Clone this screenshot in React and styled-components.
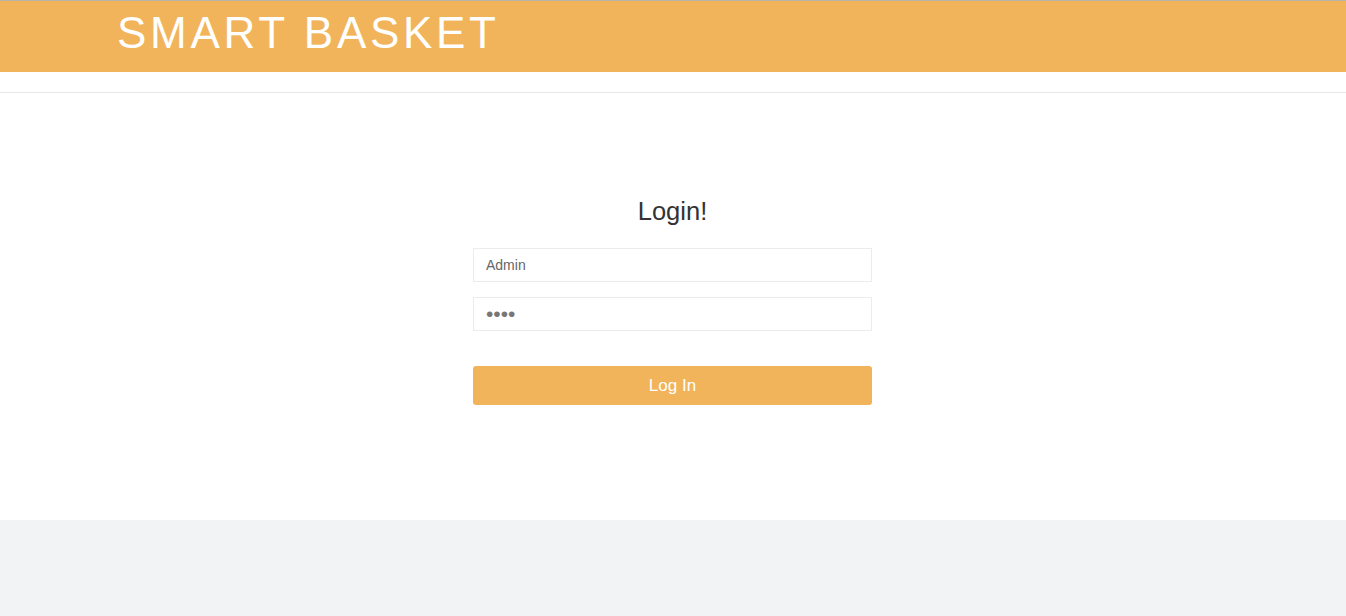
import React, { useState } from "react";
import styled, { createGlobalStyle } from "styled-components";

const GlobalStyle = createGlobalStyle`
  html, body {
    margin: 0;
    padding: 0;
    background: #f2f3f5;
    font-family: "Liberation Sans", Arial, sans-serif;
  }
`;

const ORANGE = "#f1b45a";

const Header = styled.header`
  box-sizing: border-box;
  height: 72px;
  border-top: 1px solid #b9b3a8;
  background: ${ORANGE};
  padding: 10px 0 0 117px;
`;

const Brand = styled.h1`
  margin: 0;
  font-size: 44px;
  line-height: 44px;
  font-weight: normal;
  letter-spacing: 3.7px;
  color: #ffffff;
`;

const Spacer = styled.div`
  height: 20px;
  background: #ffffff;
`;

const Section = styled.main`
  background: #ffffff;
  border-top: 1px solid #e8e8e8;
  padding: 103px 1px 115px 0;
  display: flex;
  justify-content: center;
`;

const Form = styled.form`
  width: 399px;
  display: flex;
  flex-direction: column;
`;

const Title = styled.h2`
  margin: 0 0 22px;
  text-align: center;
  font-size: 25.5px;
  line-height: 30px;
  font-weight: normal;
  color: #333333;
`;

const Input = styled.input`
  box-sizing: border-box;
  height: 34px;
  width: 100%;
  margin-bottom: ${(p) => p.$gap || 15}px;
  padding: 0 12px;
  border: 1px solid #ececec;
  border-radius: 0;
  outline: none;
  font-family: "Liberation Sans", Arial, sans-serif;
  font-size: 14px;
  color: #666666;
  background: #ffffff;

  &[type="password"] {
    font-size: 21px;
    color: #777777;
  }
`;

const Button = styled.button`
  height: 39px;
  width: 100%;
  border: none;
  border-radius: 3px;
  background: ${ORANGE};
  color: #ffffff;
  font-family: "Liberation Sans", Arial, sans-serif;
  font-size: 17px;
  cursor: pointer;

  &:hover {
    background: #eaa744;
  }
`;

const App = () => {
  const [usuario, setUsuario] = useState("Admin");
  const [senha, setSenha] = useState("1234");

  return (
    <>
      <GlobalStyle />
      <Header>
        <Brand>SMART BASKET</Brand>
      </Header>
      <Spacer />
      <Section>
        <Form onSubmit={(e) => e.preventDefault()}>
          <Title>Login!</Title>
          <Input
            type="text"
            value={usuario}
            onChange={(e) => setUsuario(e.target.value)}
          />
          <Input
            type="password"
            $gap={35}
            value={senha}
            onChange={(e) => setSenha(e.target.value)}
          />
          <Button type="submit">Log In</Button>
        </Form>
      </Section>
    </>
  );
};

export default App;
